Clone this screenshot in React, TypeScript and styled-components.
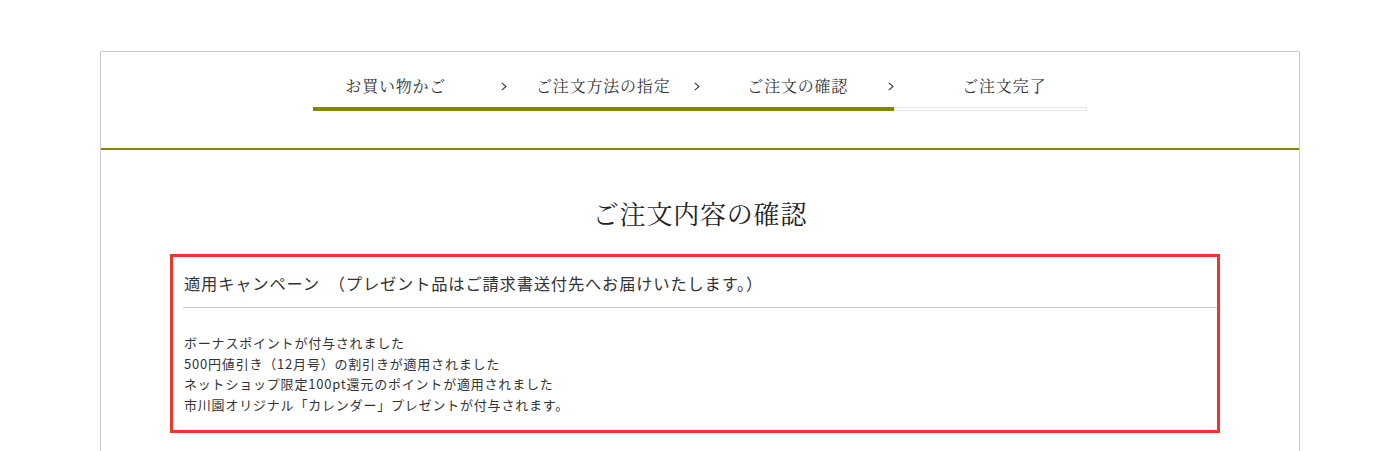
import React from "react";
import styled, { createGlobalStyle } from "styled-components";

const GlobalStyle = createGlobalStyle`
  html, body {
    margin: 0;
    padding: 0;
    background: #ffffff;
  }
  body {
    font-family: "Noto Sans CJK JP", "Noto Sans", sans-serif;
    color: #333333;
    letter-spacing: 0.05em;
  }
`;

const SERIF = `"Noto Serif CJK JP", "Liberation Serif", "Noto Sans CJK JP", serif`;
const OLIVE = "#858500";

const Page = styled.div`
  padding-top: 51px;
`;

const Frame = styled.div`
  width: 1200px;
  box-sizing: border-box;
  margin: 0 auto;
  border: 1px solid #cccccc;
  border-bottom: none;
  padding-bottom: 40px;
`;

const Header = styled.header`
  padding: 22px 0 37px;
  border-bottom: 2px solid ${OLIVE};
`;

const Steps = styled.ol`
  list-style: none;
  margin: 0 auto;
  padding: 0;
  width: 774px;
  display: grid;
  grid-template-columns: repeat(4, 1fr);
`;

const Step = styled.li`
  display: flex;
  flex-direction: column;
  gap: 9px;
`;

const StepHead = styled.div`
  position: relative;
  height: 24px;
  display: flex;
  align-items: center;
  justify-content: center;
`;

const StepLabel = styled.span<{ $shift: number }>`
  font-family: ${SERIF};
  font-size: 16px;
  line-height: 24px;
  color: #333333;
  transform: translateX(${(p) => p.$shift}px);
`;

const Chevron = styled.svg`
  position: absolute;
  right: 0;
  top: 8px;
  width: 6px;
  height: 9px;
`;

const StepBar = styled.div<{ $active: boolean }>`
  height: 4px;
  box-sizing: border-box;
  background: ${(p) => (p.$active ? OLIVE : "#ffffff")};
  border: ${(p) => (p.$active ? "none" : "1px solid #e8e8e8")};
`;

const Main = styled.main`
  padding-top: 43px;
`;

const Title = styled.h1`
  margin: 0;
  text-align: center;
  font-family: ${SERIF};
  font-weight: normal;
  font-size: 26px;
  line-height: 40px;
  color: #222222;
`;

const CampaignBox = styled.section`
  margin: 21px 0 0 69px;
  width: 1050px;
  box-sizing: border-box;
  border: 3px solid #e8382a;
`;

const CampaignHead = styled.h2`
  margin: 0 0 0 10px;
  padding: 14px 0 12px 1px;
  border-bottom: 1px solid #cccccc;
  font-size: 16.3px;
  font-weight: normal;
  line-height: 24px;
  color: #333333;
`;

const CampaignList = styled.ul`
  list-style: none;
  margin: 0;
  padding: 25px 0 15px 11px;
`;

const CampaignItem = styled.li`
  font-size: 13px;
  line-height: 20.6px;
  color: #333333;
`;

const steps = [
  { label: "お買い物かご", shift: -14, active: true },
  { label: "ご注文方法の指定", shift: 0, active: true },
  { label: "ご注文の確認", shift: 1, active: true },
  { label: "ご注文完了", shift: 14, active: false },
];

const items = [
  "ボーナスポイントが付与されました",
  "500円値引き（12月号）の割引きが適用されました",
  "ネットショップ限定100pt還元のポイントが適用されました",
  "市川園オリジナル「カレンダー」プレゼントが付与されます。",
];

export default function App() {
  return (
    <>
      <GlobalStyle />
      <Page>
        <Frame>
          <Header>
            <Steps>
              {steps.map((s, i) => (
                <Step key={s.label}>
                  <StepHead>
                    <StepLabel $shift={s.shift}>{s.label}</StepLabel>
                    {i < steps.length - 1 && (
                      <Chevron viewBox="0 0 6 9" aria-hidden="true">
                        <polyline
                          points="0.8,0.8 5,4.5 0.8,8.2"
                          fill="none"
                          stroke="#333"
                          strokeWidth="1.1"
                        />
                      </Chevron>
                    )}
                  </StepHead>
                  <StepBar $active={s.active} />
                </Step>
              ))}
            </Steps>
          </Header>
          <Main>
            <Title>ご注文内容の確認</Title>
            <CampaignBox>
              <CampaignHead>
                適用キャンペーン　（プレゼント品はご請求書送付先へお届けいたします。）
              </CampaignHead>
              <CampaignList>
                {items.map((t) => (
                  <CampaignItem key={t}>{t}</CampaignItem>
                ))}
              </CampaignList>
            </CampaignBox>
          </Main>
        </Frame>
      </Page>
    </>
  );
}
